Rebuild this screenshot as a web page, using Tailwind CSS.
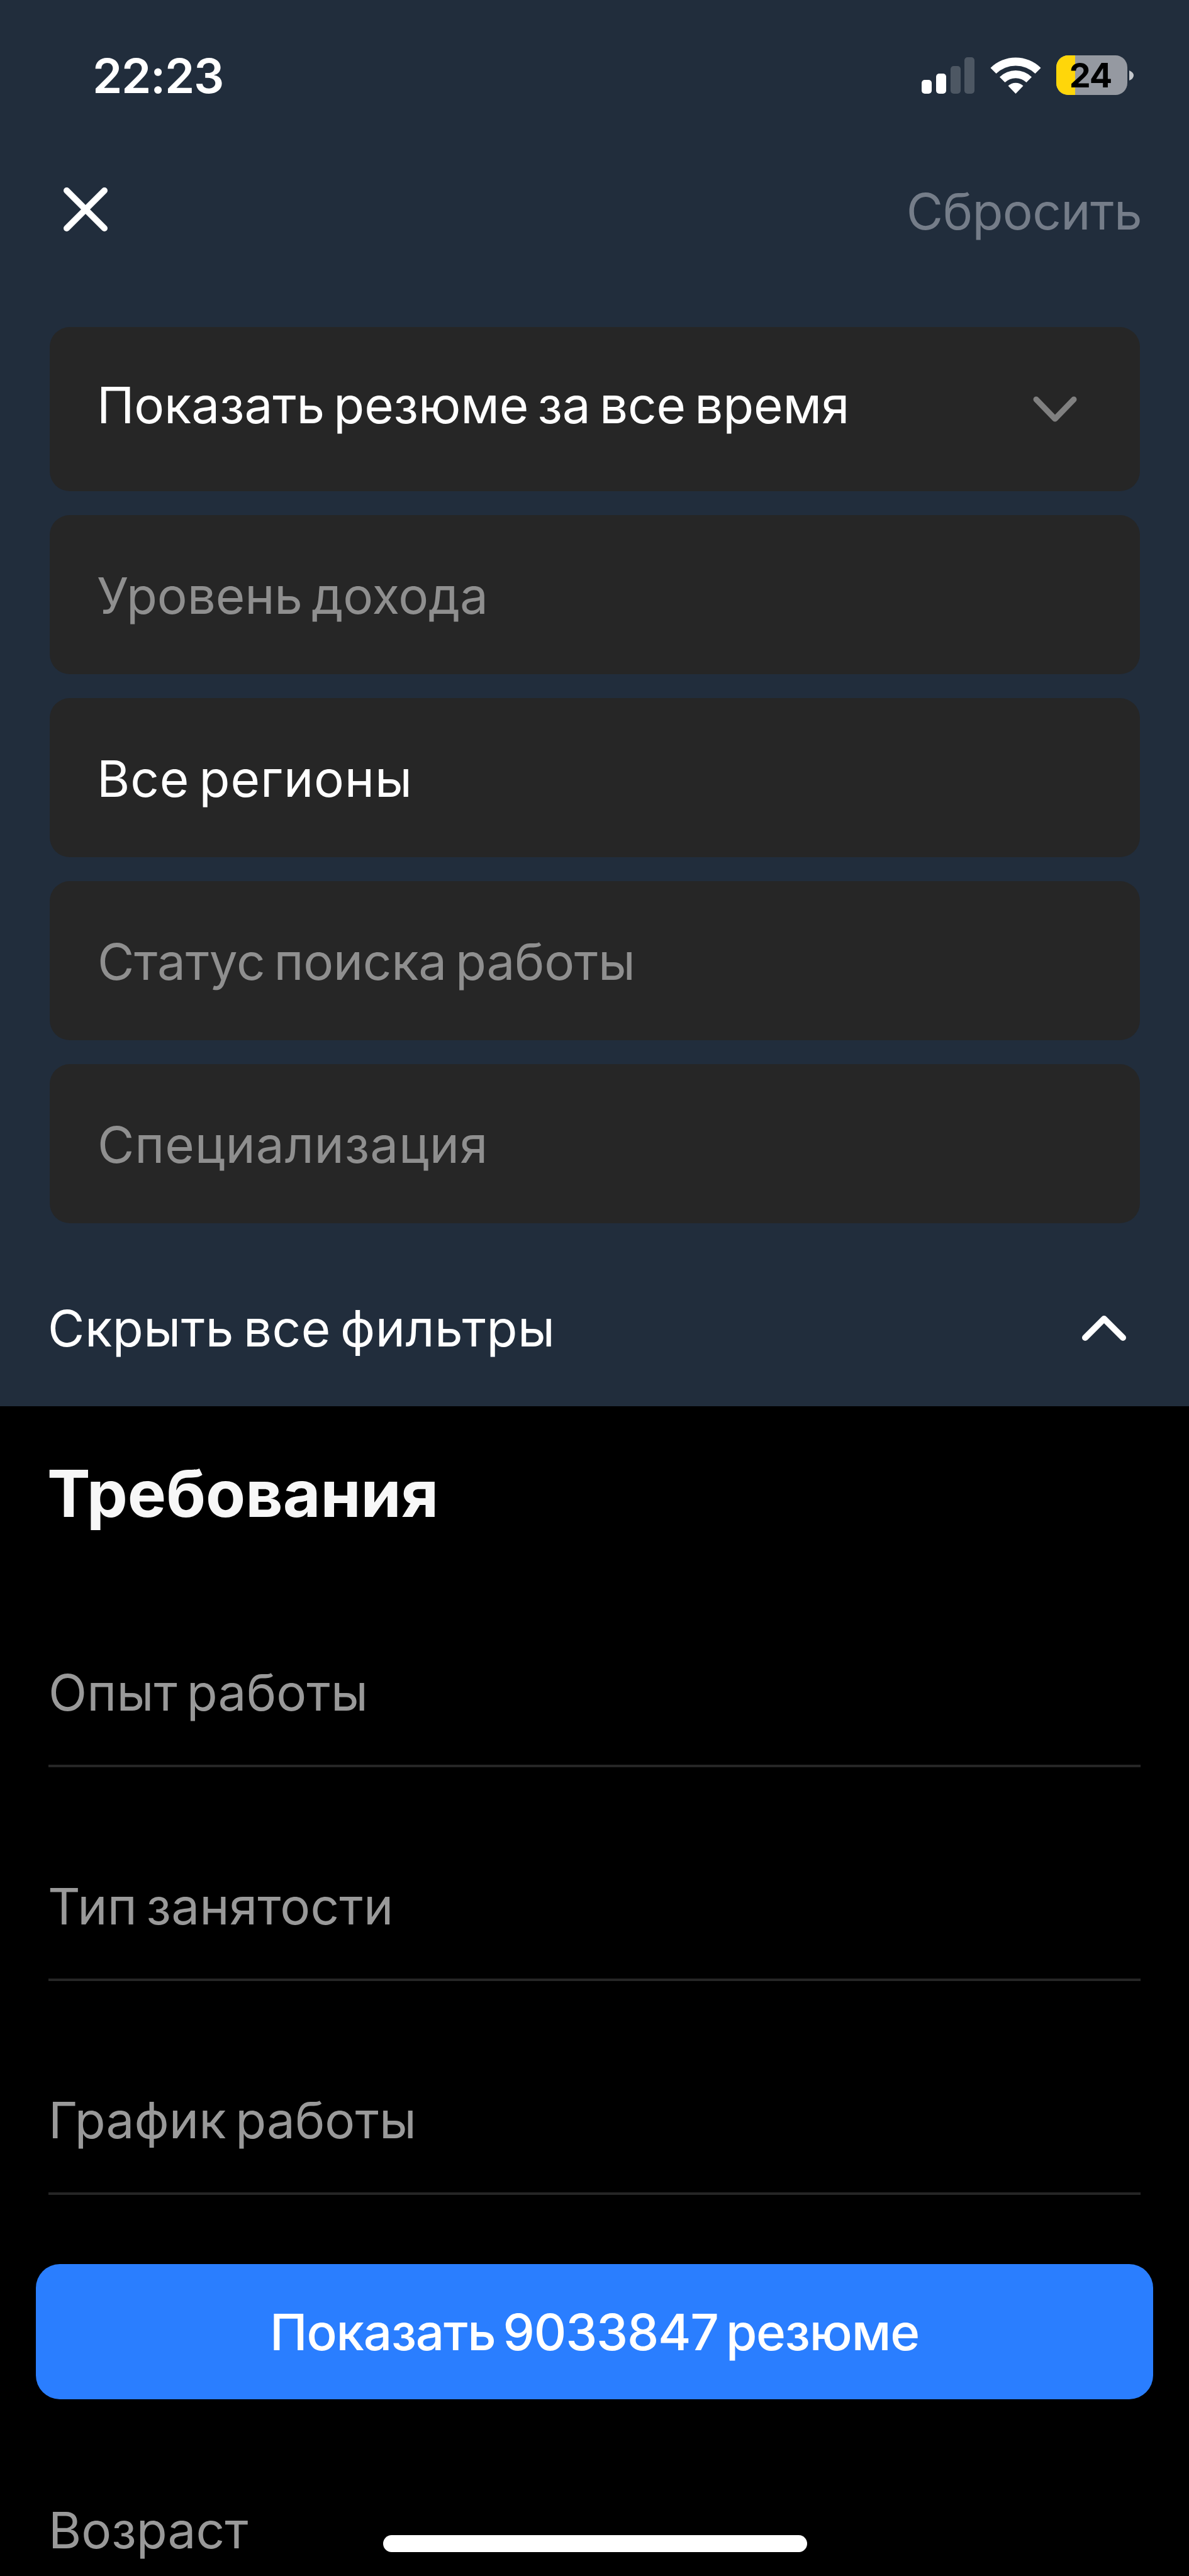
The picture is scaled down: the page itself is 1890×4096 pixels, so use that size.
<!DOCTYPE html>
<html lang="ru">
<head>
    <meta charset="UTF-8">
    <meta name="viewport" content="width=device-width, initial-scale=1.0">
    <title>Фильтры резюме</title>
    <script src="https://cdn.jsdelivr.net/npm/@tailwindcss/browser@4"></script>
</head>
<body class="bg-black">
    <div class="relative w-[1890px] h-[4096px] overflow-hidden bg-black font-['Inter',sans-serif] text-[80px] leading-[100px] [word-spacing:-8px] whitespace-nowrap">
        <div class="h-[2236px] bg-[#212d3c]">
            <!-- Status bar -->
            <div class="h-[240px] flex items-center justify-between pl-[147px] pr-[88px]">
                <span class="text-[76px] font-semibold tracking-[-1.3px] text-white">22:23</span>
                <svg class="w-[338px] h-[64px]" viewBox="0 0 338 64" fill="none">
                    <rect x="1" y="39" width="16" height="22" rx="5" fill="#fff"/>
                    <rect x="24" y="29" width="16" height="32" rx="5" fill="#fff"/>
                    <rect x="47" y="17" width="16" height="44" rx="5" fill="#4d5763"/>
                    <rect x="69" y="3" width="16" height="58" rx="5" fill="#4d5763"/>
                    <g transform="translate(150.5 61)" fill="#fff">
                        <path d="M-40 -41 A57 57 0 0 1 40 -41 L31 -32 A44.500 44.500 0 0 0 -31 -32 Z"/>
                        <path d="M-25.500 -26.500 A36.500 36.500 0 0 1 25.500 -26.500 L17 -18 A24.500 24.500 0 0 0 -17 -18 Z"/>
                        <path d="M-12 -12.500 A17.500 17.500 0 0 1 12 -12.500 L0 0 Z"/>
                    </g>
                    <clipPath id="battery"><rect x="215" y="0" width="113" height="63" rx="19"/></clipPath>
                    <g clip-path="url(#battery)">
                        <rect x="215" y="0" width="113" height="63" fill="#9599a1"/>
                        <rect x="215" y="0" width="30" height="63" fill="#ffd60a"/>
                    </g>
                    <path d="M331 24 Q338 27 338 32 Q338 37 331 40 Z" fill="#c4c7cc"/>
                    <text x="269.500" y="51" text-anchor="middle" font-size="54" font-weight="700" letter-spacing="-1" fill="#000">24</text>
                </svg>
            </div>
            <!-- Header -->
            <div class="h-[280px] flex items-start justify-between pl-[101px] pr-[75px] pt-[43px]">
                <svg class="mt-[15px] w-[70px] h-[70px]" viewBox="0 0 70 70" fill="none" stroke="#fff" stroke-width="10" stroke-linecap="round">
                    <path d="M5 5 L65 65 M65 5 L5 65"/>
                </svg>
                <span class="mt-[3px] tracking-[-0.6px] text-[#757d89]">Сбросить</span>
            </div>
            <!-- Main filters -->
            <div class="flex flex-col gap-[38px] pl-[79px] pr-[78px] text-[#8f8f8f]">
                <div class="h-[261px] rounded-[32px] bg-[#262626] flex items-center justify-between pl-[75px] pr-[100px] pb-[14px] text-white">
                    <span class="tracking-[-0.17px]">Показать резюме за все время</span>
                    <svg class="mt-[14px] w-[70px] h-[42px]" viewBox="0 0 70 42" fill="none" stroke="#808080" stroke-width="9" stroke-linecap="round" stroke-linejoin="round">
                        <path d="M5 5 L35 36 L65 5"/>
                    </svg>
                </div>
                <div class="h-[253px] rounded-[32px] bg-[#262626] flex items-center pl-[75px] pt-[3px]"><span class="tracking-[-0.14px]">Уровень дохода</span></div>
                <div class="h-[253px] rounded-[32px] bg-[#262626] flex items-center pl-[75px] pt-[3px] text-white"><span class="tracking-[0.85px]">Все регионы</span></div>
                <div class="h-[253px] rounded-[32px] bg-[#262626] flex items-center pl-[76px] pt-[3px]"><span class="tracking-[-0.32px]">Статус поиска работы</span></div>
                <div class="h-[253px] rounded-[32px] bg-[#262626] flex items-center pl-[76px] pt-[3px]"><span class="tracking-[0.92px]">Специализация</span></div>
            </div>
            <div class="flex items-center justify-between pt-[117px] pl-[76px] pr-[99px] text-white">
                <span class="tracking-[0.5px]">Скрыть все фильтры</span>
                <svg class="w-[72px] h-[44px]" viewBox="0 0 72 44" fill="none" stroke="#fff" stroke-width="10" stroke-linecap="round" stroke-linejoin="round">
                    <path d="M6 37 L36 7 L66 37"/>
                </svg>
            </div>
        </div>
        <!-- Requirements -->
        <div class="px-[77px] text-[#999]">
            <h2 class="-ml-[2px] pt-[79px] text-[103px] leading-[120px] font-bold text-[#f7f7f7]">Требования</h2>
            <div class="h-[375px] flex items-end pb-[65px] border-b-4 border-[#262626]"><span class="tracking-[0.16px]">Опыт работы</span></div>
            <div class="h-[340px] flex items-end pb-[65px] border-b-4 border-[#262626]"><span class="-ml-[1px] tracking-[0.15px]">Тип занятости</span></div>
            <div class="h-[340px] flex items-end pb-[65px] border-b-4 border-[#262626]"><span class="tracking-[0.05px]">График работы</span></div>
            <div class="h-[583px] flex items-end"><span>Возраст</span></div>
        </div>
        <!-- Sticky button and home indicator -->
        <button class="absolute left-[57px] top-[3600px] w-[1776px] h-[215px] rounded-[38px] bg-[#2a7eff] text-white font-medium tracking-[-1.24px] [word-spacing:-8px]">Показать 9033847 резюме</button>
        <div class="absolute left-[609px] top-[4031px] w-[674px] h-[27px] rounded-full bg-white"></div>
    </div>
</body>
</html>
